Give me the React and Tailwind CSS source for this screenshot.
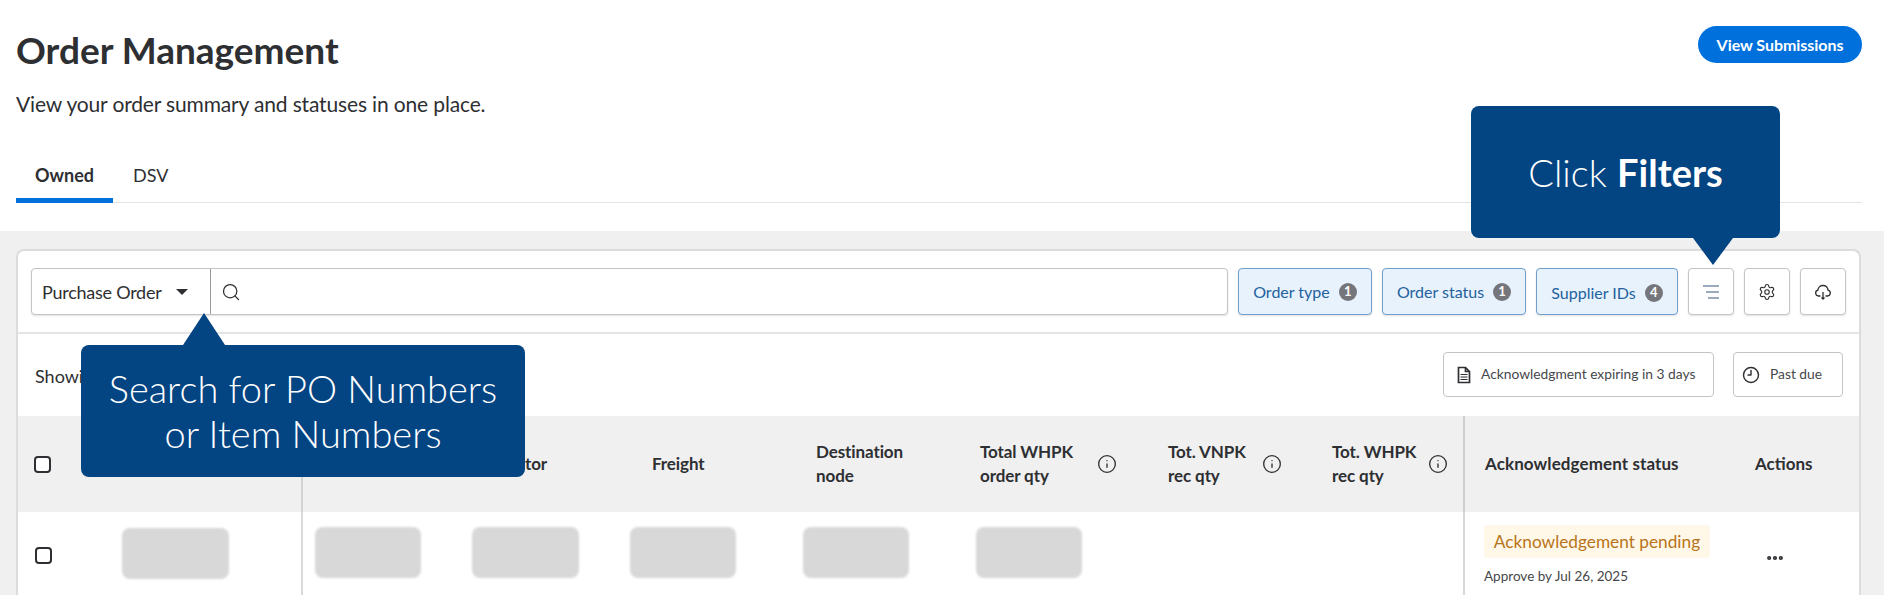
import React from 'react';
import { Search, Settings, Info, Clock9, Ellipsis } from 'lucide-react';

const font = 'font-["Lato","Liberation_Sans",sans-serif]';

const Chip = ({ label, count, width, nudge }) => (
  <button className={`${width} h-[47px] flex items-center justify-center gap-[9px] rounded border-[1.5px] border-[#6f9fcd] bg-[#e8f2fc] text-[#23619f] text-base shadow-[0_1px_2px_rgba(0,0,0,0.12)]`}>
    <span className={nudge}>{label}</span>
    <span className={`${nudge} flex h-[18px] w-[18px] items-center justify-center rounded-full bg-[#74767c] text-[13px] font-bold text-white`}>{count}</span>
  </button>
);

const IconButton = ({ children }) => (
  <button className="w-[46px] h-[47px] flex items-center justify-center rounded border-[1.5px] border-[#c4c4c4] bg-white text-[#2e2f32] shadow-[0_1px_2px_rgba(0,0,0,0.12)]">
    {children}
  </button>
);

const Skeleton = ({ width = 'w-[106px]' }) => (
  <div className={`${width} h-[51px] rounded-lg bg-[#d8d8d8] blur-[1px]`} />
);

const HeaderCell = ({ width, lines, infoGap }) => (
  <div className={`${width} shrink-0 flex items-center`}>
    <div className="text-[17px] font-bold leading-6 text-[#2e2f32] tracking-[-0.1px]">
      {lines.map((l) => <div key={l} className="whitespace-nowrap">{l}</div>)}
    </div>
    {infoGap && <Info className={`${infoGap} w-5 h-5 text-[#2e2f32]`} strokeWidth={1.6} />}
  </div>
);

const Checkbox = () => <div className="w-[17px] h-[17px] rounded-sm border-2 border-[#2e2f32] bg-white" />;

const App = () => {
  return (
    <div className={`${font} relative h-[595px] w-[1884px] overflow-hidden bg-white text-[#2e2f32]`}>
      <div className="h-[231px] px-4 pt-[26px] pr-[22px]">
        <div className="flex justify-between">
          <h1 className="text-[37px] leading-[48px] font-bold">Order Management</h1>
          <button className="w-[164px] h-[37px] rounded-full bg-[#0071dc] text-base font-bold text-white tracking-[-0.05px]">View Submissions</button>
        </div>
        <p className="mt-4 text-[21px] leading-7 tracking-[-0.15px]">View your order summary and statuses in one place.</p>
        <div className="mt-11 flex h-[41px] border-b border-[#e3e4e5]">
          <div className="w-[97px] h-[41px] border-b-[5px] border-[#0071dc] rounded-t-sm text-center text-lg leading-[26px] font-bold">Owned</div>
          <div className="pl-5 text-lg leading-[26px]">DSV</div>
        </div>
      </div>

      <div className="h-[364px] bg-[#f0f0f0] pt-[18px] pl-4 pr-[23px]">
        <div className="h-[346px] rounded-t-lg border-2 border-b-0 border-[#dcdcdc] bg-white">
          <div className="h-[83px] flex items-start gap-[10px] border-b-2 border-[#e3e4e5] pt-[17px] pl-[13px]">
            <div className="w-[1197px] h-[47px] flex rounded border-[1.5px] border-[#c4c4c4] bg-white shadow-[0_1px_2px_rgba(0,0,0,0.12)]">
              <div className="w-[179px] flex items-center border-r border-[#9a9a9a] pl-[10px] text-lg tracking-[-0.25px]">
                Purchase Order
                <span className="ml-[14px] h-0 w-0 border-x-[6px] border-t-[6px] border-x-transparent border-t-[#2e2f32]" />
              </div>
              <div className="flex items-center pl-[10px]">
                <Search className="w-5 h-5" strokeWidth={1.5} />
              </div>
            </div>
            <Chip label="Order type" count="1" width="w-[134px]" />
            <Chip label="Order status" count="1" width="w-[144px]" />
            <Chip label="Supplier IDs" count="4" width="w-[142px]" nudge="mt-[3px]" />
            <IconButton>
              <svg width="20" height="20" viewBox="0 0 20 20" fill="none" stroke="#34597f" strokeWidth="1.2">
                <path d="M2 4h16M5 10h13M7 16h11" />
              </svg>
            </IconButton>
            <IconButton>
              <Settings className="w-[18px] h-[18px]" strokeWidth={1.5} />
            </IconButton>
            <IconButton>
              <svg width="20" height="20" viewBox="0 0 20 20" fill="none" stroke="currentColor" strokeWidth="1.3">
                <path d="M7.5 14H5.5a3 3 0 0 1-.6-5.9A5 5 0 0 1 10 3.5a4.8 4.8 0 0 1 5 4.6A3 3 0 0 1 14.5 14H12.5M10 10v7M8.5 15.5l1.5 1.5 1.5-1.5" />
              </svg>
            </IconButton>
          </div>

          <div className="h-[82px] flex items-start justify-between pt-[18px] pl-[17px] pr-4">
            <span className="mt-[12px] text-lg leading-6">Showing 1-25 orders</span>
            <div className="flex gap-[19px] text-[13.8px] text-[#46474a]">
              <button className="w-[271px] h-[45px] flex items-center gap-2 rounded border-[1.5px] border-[#c4c4c4] pl-[11px]">
                <svg width="18" height="18" viewBox="0 0 18 18" fill="none" stroke="#2e2f32" strokeWidth="1.7">
                  <path d="M3.5 1.5h7l4 4v11h-11zM10.5 1.5v4h4" />
                  <path d="M5.5 8.5h7M5.5 11h7M5.5 13.5h7" strokeWidth="1.2" />
                </svg>
                Acknowledgment expiring in 3 days
              </button>
              <button className="w-[110px] h-[45px] flex items-center gap-[10px] rounded border-[1.5px] border-[#c4c4c4] pl-[8px]">
                <Clock9 className="w-[18px] h-[18px] text-[#2e2f32]" strokeWidth={1.9} />
                Past due
              </button>
            </div>
          </div>

          <div className="h-[96px] flex bg-[#f0f0f0]">
            <div className="w-[285px] shrink-0 flex items-center border-r-2 border-[#d3d3d3] pl-4">
              <Checkbox />
              <span className="ml-[60px] text-base font-bold">PO number</span>
            </div>
            <div className="flex flex-1 pl-3">
              <HeaderCell width="w-[150px]" lines={['Order type']} />
              <HeaderCell width="w-[187px]" lines={['Distributor']} />
              <HeaderCell width="w-[164px]" lines={['Freight']} />
              <HeaderCell width="w-[164px]" lines={['Destination', 'node']} />
              <HeaderCell width="w-[188px]" lines={['Total WHPK', 'order qty']} infoGap="ml-6" />
              <HeaderCell width="w-[164px]" lines={['Tot. VNPK', 'rec qty']} infoGap="ml-4" />
              <HeaderCell width="w-[131px]" lines={['Tot. WHPK', 'rec qty']} infoGap="ml-3" />
            </div>
            <div className="w-[396px] shrink-0 flex items-center border-l-2 border-[#cfcfcf] pl-5 text-[17px] font-bold">
              <span className="w-[270px] tracking-[0.1px]">Acknowledgement status</span>
              <span>Actions</span>
            </div>
          </div>

          <div className="h-[83px] flex bg-white">
            <div className="w-[285px] shrink-0 flex border-r-2 border-[#d9d9d9] pl-[17px] pt-[35px]">
              <Checkbox />
              <div className="ml-[70px] -mt-[19px]"><Skeleton width="w-[107px]" /></div>
            </div>
            <div className="flex flex-1 pl-3 pt-[15px]">
              <div className="w-[157px]"><Skeleton /></div>
              <div className="w-[158px]"><Skeleton width="w-[107px]" /></div>
              <div className="w-[173px]"><Skeleton /></div>
              <div className="w-[173px]"><Skeleton /></div>
              <Skeleton />
            </div>
            <div className="w-[396px] shrink-0 flex border-l-2 border-[#d9d9d9] pl-[19px] pt-[13px]">
              <div className="w-[281px]">
                <div className="w-[226px] h-[33px] flex items-center justify-center rounded bg-[#fff8e8] text-[17.25px] text-[#b8741a]">Acknowledgement pending</div>
                <div className="mt-2 text-[13.5px] leading-5 text-[#46474a]">Approve by Jul 26, 2025</div>
              </div>
              <Ellipsis className="mt-[23px] w-5 h-5" strokeWidth={3} />
            </div>
          </div>
        </div>
      </div>

      {/* coach marks sit over the toolbar */}
      <div className="absolute left-[1471px] top-[106px] w-[309px] h-[132px] flex items-center justify-center rounded-lg bg-[#034482] text-[38px] font-light text-white">
        <span>Click <b className="font-bold">Filters</b></span>
        <div className="absolute left-[222px] top-[132px] h-0 w-0 border-x-[20px] border-t-[27px] border-x-transparent border-t-[#034482]" />
      </div>
      <div className="absolute left-[81px] top-[345px] w-[444px] h-[132px] flex items-center justify-center rounded-lg bg-[#034482] text-center text-[38px] font-light leading-[45px] text-white">
        <span>Search for PO Numbers<br />or Item Numbers</span>
        <div className="absolute left-[102px] -top-[32px] h-0 w-0 border-x-[21px] border-b-[32px] border-x-transparent border-b-[#034482]" />
      </div>
    </div>
  );
};

export default App;
